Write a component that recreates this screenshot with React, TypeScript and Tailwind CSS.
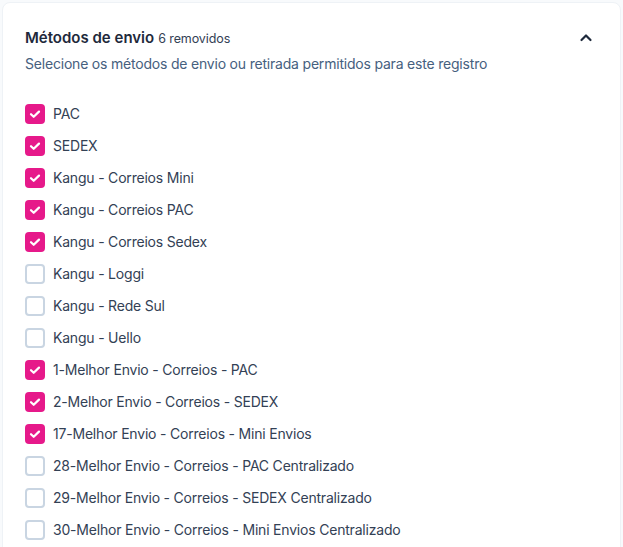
import React, { useState } from 'react'

const METHODS: { name: string; checked: boolean }[] = [
    { name: 'PAC', checked: true },
    { name: 'SEDEX', checked: true },
    { name: 'Kangu - Correios Mini', checked: true },
    { name: 'Kangu - Correios PAC', checked: true },
    { name: 'Kangu - Correios Sedex', checked: true },
    { name: 'Kangu - Loggi', checked: false },
    { name: 'Kangu - Rede Sul', checked: false },
    { name: 'Kangu - Uello', checked: false },
    { name: '1-Melhor Envio - Correios - PAC', checked: true },
    { name: '2-Melhor Envio - Correios - SEDEX', checked: true },
    { name: '17-Melhor Envio - Correios - Mini Envios', checked: true },
    { name: '28-Melhor Envio - Correios - PAC Centralizado', checked: false },
    { name: '29-Melhor Envio - Correios - SEDEX Centralizado', checked: false },
    { name: '30-Melhor Envio - Correios - Mini Envios Centralizado', checked: false },
]

function Checkbox({ checked, onClick }: { checked: boolean; onClick: () => void }) {
    return (
        <button
            type="button"
            onClick={onClick}
            className={
                checked
                    ? 'flex h-5 w-5 shrink-0 items-center justify-center rounded-[4px] bg-[#e6198a]'
                    : 'flex h-5 w-5 shrink-0 items-center justify-center rounded-[4px] border-2 border-[#c9d5e2] bg-white'
            }
        >
            {checked && (
                <svg width="20" height="20" viewBox="0 0 20 20" fill="none">
                    <path
                        d="M6 10.2l2.7 2.6L14 7.6"
                        stroke="white"
                        strokeWidth="2.2"
                        strokeLinecap="round"
                        strokeLinejoin="round"
                    />
                </svg>
            )}
        </button>
    )
}

export default function App() {
    const [items, setItems] = useState(METHODS)
    const [open, setOpen] = useState(true)

    const toggle = (i: number) =>
        setItems((prev) =>
            prev.map((item, idx) => (idx === i ? { ...item, checked: !item.checked } : item))
        )

    return (
        <div
            className="min-h-screen bg-[#f8fafc] p-[2px]"
            style={{ fontFamily: 'Inter, "Noto Sans", sans-serif' }}
        >
            <div className="rounded-lg border border-[#eef2f6] bg-white px-[22px] pt-[23px] pb-6">
                <div className="flex items-center justify-between">
                    <div className="flex items-baseline gap-1">
                        <h2 className="text-[15px] font-semibold leading-6 text-[#1e293b]">
                            Métodos de envio
                        </h2>
                        <span className="text-[12.5px] tracking-[-0.1px] text-[#334155]">
                            6 removidos
                        </span>
                    </div>
                    <button
                        type="button"
                        onClick={() => setOpen(!open)}
                        className="mr-[4px] -mt-[1px] text-[#1e293b]"
                    >
                        <svg width="16" height="16" viewBox="0 0 16 16" fill="none">
                            <path
                                d="M3.5 10l4.5-4.5 4.5 4.5"
                                stroke="currentColor"
                                strokeWidth="2.2"
                                strokeLinecap="round"
                                strokeLinejoin="round"
                            />
                        </svg>
                    </button>
                </div>
                <p className="mt-[4px] text-sm leading-5 tracking-[-0.2px] text-[#46607e]">
                    Selecione os métodos de envio ou retirada permitidos para este registro
                </p>

                {open && (
                    <ul className="mt-[24px]">
                        {items.map((item, i) => (
                            <li key={item.name} className="flex h-8 items-center gap-2">
                                <Checkbox checked={item.checked} onClick={() => toggle(i)} />
                                <span className="text-sm tracking-[-0.2px] text-[#334155]">
                                    {item.name}
                                </span>
                            </li>
                        ))}
                    </ul>
                )}
            </div>
        </div>
    )
}
